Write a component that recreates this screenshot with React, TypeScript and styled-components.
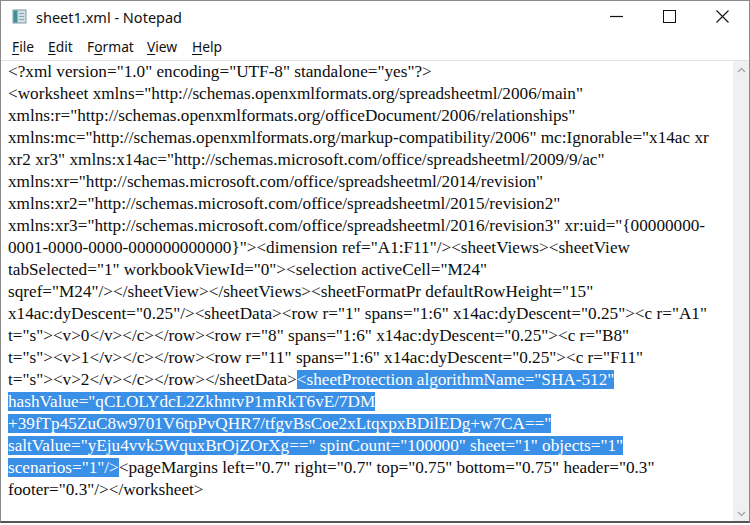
import styled, { createGlobalStyle } from 'styled-components'

const Global = createGlobalStyle`
  html, body {
    margin: 0;
    padding: 0;
    background: #fff;
  }
`

const Window = styled.div`
  width: 750px;
  height: 523px;
  box-sizing: border-box;
  border: 1px solid #8a8a8a;
  border-bottom: 2px solid #555;
  display: flex;
  flex-direction: column;
  background: #fff;
  overflow: hidden;
`

const TitleBar = styled.div`
  height: 31px;
  display: flex;
  align-items: center;
  padding-left: 11px;
  font-family: "Noto Sans", "Open Sans", sans-serif;
  font-size: 14.5px;
  color: #111;
`

const Title = styled.div`
  margin-left: 9px;
  flex: 1;
`

const Controls = styled.div`
  display: flex;
  height: 100%;
`

const ControlButton = styled.div`
  width: 53px;
  height: 100%;
  display: flex;
  align-items: center;
  justify-content: center;
`

const MenuBar = styled.div`
  height: 28px;
  display: flex;
  align-items: center;
  padding-left: 11px;
  padding-top: 1px;
  box-sizing: border-box;
  font-family: "Noto Sans", "Open Sans", sans-serif;
  font-size: 13.8px;
  color: #111;
`

const MenuItem = styled.div<{ $w: number }>`
  width: ${p => p.$w}px;
  u {
    text-decoration: underline;
    text-underline-offset: 2px;
  }
`

const Editor = styled.div`
  flex: 1;
  display: flex;
  border-top: 1px solid #e3e3e3;
  min-height: 0;
`

const TextArea = styled.div`
  flex: 1;
  padding: 0 0 0 7px;
  font-family: "Liberation Serif", "Times New Roman", serif;
  font-size: 17.2px;
  color: #0d0d0d;
`

const Line = styled.div`
  height: 22px;
  line-height: 22px;
  white-space: pre;
`

const Sel = styled.span`
  background: #3a8fe6;
  color: #fff;
`

const Scrollbar = styled.div`
  width: 16px;
  background: #f0f0f0;
  display: flex;
  flex-direction: column;
  justify-content: space-between;
  align-items: center;
  padding: 6px 0 4px;
`

const Icon = () => (
  <svg width="15" height="15" viewBox="0 0 15 15">
    <rect x="1" y="1" width="13" height="13" fill="#cfe0e4" stroke="#7f9aa0" />
    <rect x="1.5" y="1.5" width="4" height="12" fill="#3f8f9a" />
    <rect x="7" y="4" width="5" height="1" fill="#8aa" />
    <rect x="7" y="7" width="5" height="1" fill="#8aa" />
    <rect x="7" y="10" width="5" height="1" fill="#8aa" />
  </svg>
)

const lines: React.ReactNode[] = [
  '<?xml version="1.0" encoding="UTF-8" standalone="yes"?>',
  '<worksheet xmlns="http://schemas.openxmlformats.org/spreadsheetml/2006/main"',
  'xmlns:r="http://schemas.openxmlformats.org/officeDocument/2006/relationships"',
  'xmlns:mc="http://schemas.openxmlformats.org/markup-compatibility/2006" mc:Ignorable="x14ac xr',
  'xr2 xr3" xmlns:x14ac="http://schemas.microsoft.com/office/spreadsheetml/2009/9/ac"',
  'xmlns:xr="http://schemas.microsoft.com/office/spreadsheetml/2014/revision"',
  'xmlns:xr2="http://schemas.microsoft.com/office/spreadsheetml/2015/revision2"',
  'xmlns:xr3="http://schemas.microsoft.com/office/spreadsheetml/2016/revision3" xr:uid="{00000000-',
  '0001-0000-0000-000000000000}"><dimension ref="A1:F11"/><sheetViews><sheetView',
  'tabSelected="1" workbookViewId="0"><selection activeCell="M24"',
  'sqref="M24"/></sheetView></sheetViews><sheetFormatPr defaultRowHeight="15"',
  'x14ac:dyDescent="0.25"/><sheetData><row r="1" spans="1:6" x14ac:dyDescent="0.25"><c r="A1"',
  't="s"><v>0</v></c></row><row r="8" spans="1:6" x14ac:dyDescent="0.25"><c r="B8"',
  't="s"><v>1</v></c></row><row r="11" spans="1:6" x14ac:dyDescent="0.25"><c r="F11"',
  <>
    {'t="s"><v>2</v></c></row></sheetData>'}
    <Sel>{'<sheetProtection algorithmName="SHA-512"'}</Sel>
  </>,
  <Sel>{'hashValue="qCLOLYdcL2ZkhntvP1mRkT6vE/7DM'}</Sel>,
  <Sel>{'+39fTp45ZuC8w9701V6tpPvQHR7/tfgvBsCoe2xLtqxpxBDilEDg+w7CA=="'}</Sel>,
  <Sel>{'saltValue="yEju4vvk5WquxBrOjZOrXg==" spinCount="100000" sheet="1" objects="1"'}</Sel>,
  <>
    <Sel>{'scenarios="1"/>'}</Sel>
    {'<pageMargins left="0.7" right="0.7" top="0.75" bottom="0.75" header="0.3"'}
  </>,
  'footer="0.3"/></worksheet>',
]

const Chevron = ({ up }: { up?: boolean }) => (
  <svg width="9" height="6" viewBox="0 0 9 6">
    <path
      d={up ? 'M1 5 L4.5 1.5 L8 5' : 'M1 1 L4.5 4.5 L8 1'}
      fill="none"
      stroke="#a0a0a0"
      strokeWidth="1.2"
    />
  </svg>
)

export default function App() {
  return (
    <>
      <Global />
      <Window>
        <TitleBar>
          <Icon />
          <Title>sheet1.xml - Notepad</Title>
          <Controls>
            <ControlButton>
              <svg width="13" height="13" viewBox="0 0 13 13">
                <path d="M0 6.5 H13" stroke="#111" strokeWidth="1.2" />
              </svg>
            </ControlButton>
            <ControlButton>
              <svg width="13" height="13" viewBox="0 0 13 13">
                <rect x="0.5" y="0.5" width="12" height="12" fill="none" stroke="#111" />
              </svg>
            </ControlButton>
            <ControlButton>
              <svg width="13" height="13" viewBox="0 0 13 13">
                <path d="M0.5 0.5 L12.5 12.5 M12.5 0.5 L0.5 12.5" stroke="#111" strokeWidth="1.1" />
              </svg>
            </ControlButton>
          </Controls>
        </TitleBar>
        <MenuBar>
          <MenuItem $w={36}><u>F</u>ile</MenuItem>
          <MenuItem $w={39}><u>E</u>dit</MenuItem>
          <MenuItem $w={60}>F<u>o</u>rmat</MenuItem>
          <MenuItem $w={45}><u>V</u>iew</MenuItem>
          <MenuItem $w={40}><u>H</u>elp</MenuItem>
        </MenuBar>
        <Editor>
          <TextArea>
            {lines.map((l, i) => (
              <Line key={i}>{l}</Line>
            ))}
          </TextArea>
          <Scrollbar>
            <Chevron up />
            <Chevron />
          </Scrollbar>
        </Editor>
      </Window>
    </>
  )
}
